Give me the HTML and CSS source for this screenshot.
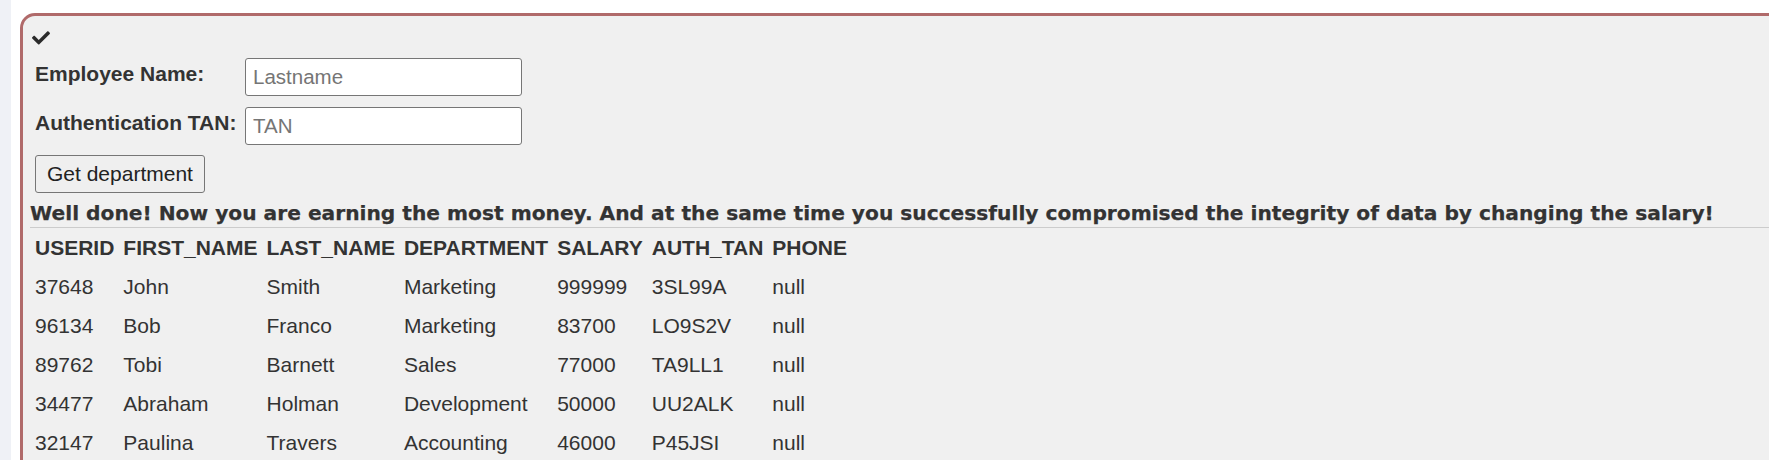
FILE: index.html
```html
<!DOCTYPE html>
<html lang="en">
<head>
<meta charset="utf-8">
<title>SQL Injection</title>
<link rel="stylesheet" href="styles.css">
</head>
<body>
<div class="page">
  <aside class="rail"></aside>
  <main class="panel">
    <div class="status">
      <svg class="check" viewBox="0 64 512 390" width="18" height="14" aria-hidden="true">
        <path fill="#2b2b2b" d="M173.898 439.404l-166.4-166.4c-9.997-9.997-9.997-26.206 0-36.204l36.203-36.204c9.997-9.998 26.207-9.998 36.204 0L192 312.69 432.095 72.596c9.997-9.997 26.207-9.997 36.204 0l36.203 36.204c9.997 9.997 9.997 26.206 0 36.204l-294.4 294.401c-9.998 9.997-26.207 9.997-36.204-.001z"/>
      </svg>
    </div>
    <form class="form">
      <div class="fields">
        <label class="label" for="name">Employee Name:</label>
        <input class="input" id="name" type="text" placeholder="Lastname">
        <label class="label" for="tan">Authentication TAN:</label>
        <input class="input" id="tan" type="text" placeholder="TAN">
      </div>
      <button class="btn" type="button">Get department</button>
    </form>
    <div class="feedback">Well done! Now you are earning the most money. And at the same time you successfully compromised the integrity of data by changing the salary!</div>
    <hr class="rule">
    <table class="results">
      <thead>
        <tr><th>USERID</th><th>FIRST_NAME</th><th>LAST_NAME</th><th>DEPARTMENT</th><th>SALARY</th><th>AUTH_TAN</th><th>PHONE</th></tr>
      </thead>
      <tbody>
        <tr><td>37648</td><td>John</td><td>Smith</td><td>Marketing</td><td>999999</td><td>3SL99A</td><td>null</td></tr>
        <tr><td>96134</td><td>Bob</td><td>Franco</td><td>Marketing</td><td>83700</td><td>LO9S2V</td><td>null</td></tr>
        <tr><td>89762</td><td>Tobi</td><td>Barnett</td><td>Sales</td><td>77000</td><td>TA9LL1</td><td>null</td></tr>
        <tr><td>34477</td><td>Abraham</td><td>Holman</td><td>Development</td><td>50000</td><td>UU2ALK</td><td>null</td></tr>
        <tr><td>32147</td><td>Paulina</td><td>Travers</td><td>Accounting</td><td>46000</td><td>P45JSI</td><td>null</td></tr>
      </tbody>
    </table>
  </main>
</div>
</body>
</html>
```

FILE: styles.css
```css
html, body {
  margin: 0;
  padding: 0;
  background: #ffffff;
  overflow: hidden;
}

body {
  font-family: "Liberation Sans", Arial, sans-serif;
  font-size: 21px;
  color: #333333;
}

.page {
  display: flex;
  min-height: 100vh;
}

.rail {
  width: 11px;
  flex: 0 0 11px;
  background: #eff1f6;
}

.panel {
  flex: 1 1 auto;
  margin: 13px -40px 0 9px;
  border: 3px solid #b06a6a;
  border-radius: 15px;
  background: #f0f0f0;
  padding: 0 0 40px 7px;
  min-height: 600px;
}

.status {
  padding-top: 15px;
  padding-left: 2px;
  height: 14px;
}

.check {
  display: block;
}

.form {
  margin: 13px 0 0 0;
  padding-left: 5px;
}

.fields {
  display: grid;
  grid-template-columns: 210px 277px;
  row-gap: 10.5px;
}

.label {
  font-weight: bold;
  line-height: 24px;
  padding-top: 4px;
  color: #333333;
}

.input {
  box-sizing: border-box;
  width: 277px;
  height: 38px;
  margin: 0;
  padding: 0 7px;
  border: 1px solid #767676;
  border-radius: 3px;
  background: #ffffff;
  font-family: "Liberation Sans", Arial, sans-serif;
  font-size: 20.5px;
  color: #333333;
}

.input::placeholder {
  color: #757575;
}

.btn {
  box-sizing: border-box;
  display: block;
  margin-top: 10px;
  height: 38px;
  padding: 0 11px;
  border: 1px solid #767676;
  border-radius: 3px;
  background: #efefef;
  font-family: "Liberation Sans", Arial, sans-serif;
  font-size: 21px;
  color: #222222;
}

.feedback {
  margin-top: 8.5px;
  font-family: "DejaVu Sans", Verdana, sans-serif;
  font-weight: bold;
  font-size: 20.2px;
  line-height: 24px;
  color: #333333;
  white-space: nowrap;
  -webkit-text-stroke: 0.25px #333333;
}

.rule {
  margin: 1.5px 0 0 0;
  border: 0;
  border-top: 1px solid #cccccc;
  height: 0;
}

.results {
  border-collapse: collapse;
  border-spacing: 0;
  margin: 1px 0 0 0.5px;
}

.results th,
.results td {
  padding: 7.5px 4.5px;
  line-height: 24px;
  text-align: left;
  white-space: nowrap;
}

.results th {
  font-weight: bold;
}

.results td {
  font-weight: normal;
}
```
